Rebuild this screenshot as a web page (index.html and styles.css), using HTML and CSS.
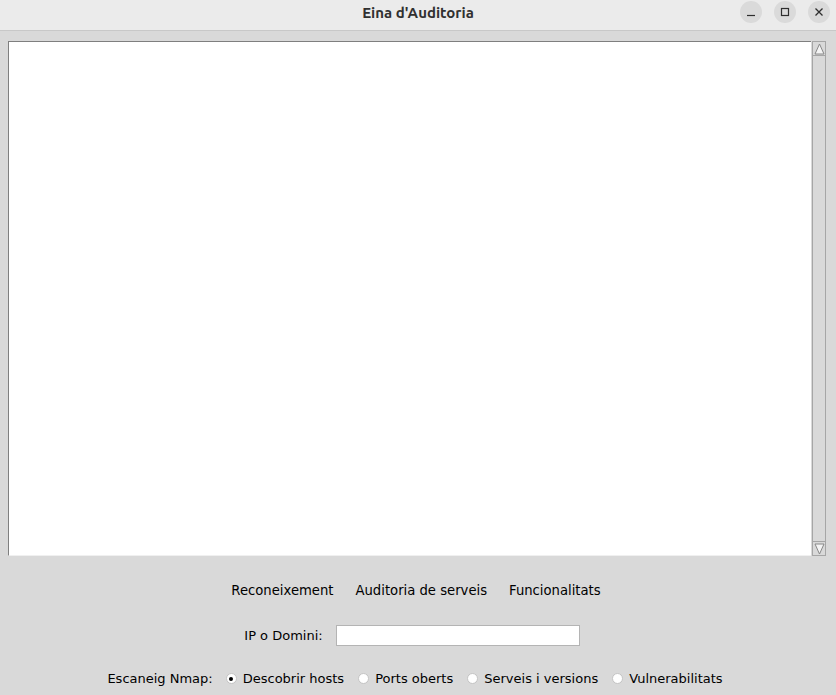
FILE: index.html
```html
<!DOCTYPE html>
<html lang="ca">
<head>
<meta charset="utf-8">
<title>Eina d'Auditoria</title>
<link rel="stylesheet" href="styles.css">
</head>
<body>
<div class="window">
  <header class="titlebar">
    <div class="title">Eina d'Auditoria</div>
    <div class="controls">
      <span class="ctl"><svg width="10" height="10" viewBox="0 0 10 10"><path d="M1 8.5h8" stroke="#2e2e2e" stroke-width="1.2"/></svg></span>
      <span class="ctl"><svg width="10" height="10" viewBox="0 0 10 10"><rect x="1.5" y="1.5" width="7" height="7" fill="none" stroke="#2e2e2e" stroke-width="1.2"/></svg></span>
      <span class="ctl"><svg width="10" height="10" viewBox="0 0 10 10"><path d="M1.5 1.5l7 7M8.5 1.5l-7 7" stroke="#2e2e2e" stroke-width="1.3"/></svg></span>
    </div>
  </header>
  <main class="content">
    <div class="textwrap">
      <div class="textarea"></div>
      <div class="scrollbar">
        <div class="arrow up"><svg width="11" height="12" viewBox="0 0 11 12"><path d="M5.5 1L10 11H1Z" fill="#f4f4f4" stroke="#888" stroke-width="1"/></svg></div>
        <div class="trough"></div>
        <div class="arrow down"><svg width="11" height="12" viewBox="0 0 11 12"><path d="M5.5 11L10 1H1Z" fill="#f4f4f4" stroke="#888" stroke-width="1"/></svg></div>
      </div>
    </div>
    <nav class="menu">
      <span>Reconeixement</span>
      <span>Auditoria de serveis</span>
      <span>Funcionalitats</span>
    </nav>
    <div class="iprow">
      <label>IP o Domini:</label>
      <div class="entry"></div>
    </div>
    <div class="radios">
      <span class="lbl">Escaneig Nmap:</span>
      <span class="radio"><span class="dot on"></span>Descobrir hosts</span>
      <span class="radio"><span class="dot"></span>Ports oberts</span>
      <span class="radio"><span class="dot"></span>Serveis i versions</span>
      <span class="radio"><span class="dot"></span>Vulnerabilitats</span>
    </div>
  </main>
</div>
</body>
</html>
```
FILE: styles.css
```css
* { box-sizing: border-box; }
html, body { margin: 0; padding: 0; }
body {
  width: 836px;
  height: 695px;
  overflow: hidden;
  background: #d9d9d9;
  font-family: "DejaVu Sans", sans-serif;
  font-size: 13px;
  color: #000;
}
.window { display: flex; flex-direction: column; height: 695px; }
.titlebar {
  height: 31px;
  background: #ebebeb;
  border-bottom: 1px solid #c8c8c8;
  position: relative;
  display: flex;
  align-items: center;
  justify-content: center;
  flex: none;
  padding-bottom: 5px;
}
.title {
  font-family: "Ubuntu", "DejaVu Sans", sans-serif;
  font-weight: bold;
  font-size: 15px;
  color: #303030;
}
.controls {
  position: absolute;
  right: 6px;
  top: 1px;
  display: flex;
  gap: 12px;
}
.ctl {
  width: 22px;
  height: 22px;
  border-radius: 50%;
  background: #dadada;
  display: flex;
  align-items: center;
  justify-content: center;
}
.content { flex: 1; display: flex; flex-direction: column; padding: 10px 10px 0 8px; }
.textwrap { display: flex; height: 515px; }
.textarea {
  flex: 1;
  background: #fff;
  border-top: 1px solid #7f7f7f;
  border-left: 1px solid #7f7f7f;
  border-bottom: 1px solid #f0f0f0;
}
.scrollbar {
  width: 14px;
  display: flex;
  flex-direction: column;
  background: #d9d9d9;
  border: 1px solid #a6a6a6;
  margin-left: 1px;
}
.arrow { height: 14px; display: flex; align-items: center; justify-content: center; background: #d9d9d9; }
.arrow.up { border-bottom: 1px solid #a6a6a6; }
.arrow.down { border-top: 1px solid #a6a6a6; }
.trough { flex: 1; background: #d9d9d9; }
.menu {
  display: flex;
  justify-content: center;
  gap: 22px;
  margin-top: 25px;
  height: 18px;
  align-items: center;
  padding-right: 2px;
  font-size: 13.2px;
}
.iprow {
  display: flex;
  justify-content: center;
  align-items: center;
  gap: 13px;
  margin-top: 26px;
  padding-right: 10px;
}
.entry {
  width: 244px;
  height: 21px;
  background: #fff;
  border: 1px solid #b4b4b4;
}
.radios {
  display: flex;
  justify-content: center;
  align-items: center;
  margin-top: 25px;
  gap: 14px;
  padding-right: 4px;
}
.radio { display: flex; align-items: center; gap: 6px; }
.lbl { margin-right: -1px; }
.dot {
  width: 11px;
  height: 11px;
  border-radius: 50%;
  background: #fff;
  border: 1px solid #c4c4c4;
  position: relative;
}
.dot.on::after {
  content: "";
  position: absolute;
  left: 2.5px; top: 2.5px;
  width: 4px; height: 4px;
  border-radius: 50%;
  background: #000;
}
```
